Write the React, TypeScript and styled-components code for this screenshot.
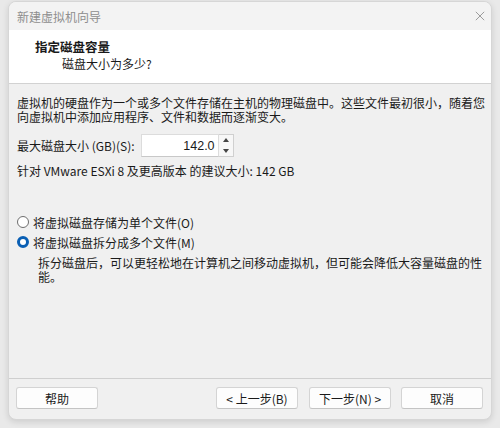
import React from 'react';
import { styled, createGlobalStyle } from 'styled-components';

const GlobalStyle = createGlobalStyle`
  html, body {
    margin: 0;
    padding: 0;
    background: #e9e9e9;
    font-family: "Noto Sans CJK SC", "Liberation Sans", sans-serif;
    font-size: 12px;
    color: #1a1a1a;
  }
`;

const App: React.FC = () => {
  return (
    <>
      <GlobalStyle />
      <Stage>
        <Window>
          <TitleBar>
            <span>新建虚拟机向导</span>
            <CloseIcon viewBox="0 0 12 12">
              <path d="M1 1 L11 11 M11 1 L1 11" stroke="#8a8a8a" strokeWidth="1" fill="none" />
            </CloseIcon>
          </TitleBar>
          <Header>
            <h4>指定磁盘容量</h4>
            <p>磁盘大小为多少?</p>
          </Header>
          <Body>
            <Para>
              虚拟机的硬盘作为一个或多个文件存储在主机的物理磁盘中。这些文件最初很小，随着您向虚拟机中添加应用程序、文件和数据而逐渐变大。
            </Para>
            <SizeRow>
              <span>最大磁盘大小 (GB)(S):</span>
              <SpinBox>
                <input value="142.0" readOnly />
                <Spinner>
                  <SpinButton>
                    <svg viewBox="0 0 6 4"><path d="M0 4 L3 0 L6 4 Z" fill="#444" /></svg>
                  </SpinButton>
                  <SpinButton>
                    <svg viewBox="0 0 6 4"><path d="M0 0 L3 4 L6 0 Z" fill="#444" /></svg>
                  </SpinButton>
                </Spinner>
              </SpinBox>
            </SizeRow>
            <Hint>针对 VMware ESXi 8 及更高版本 的建议大小: 142 GB</Hint>
            <Options>
              <RadioRow>
                <Radio $checked={false} />
                <span>将虚拟磁盘存储为单个文件(O)</span>
              </RadioRow>
              <RadioRow>
                <Radio $checked />
                <span>将虚拟磁盘拆分成多个文件(M)</span>
              </RadioRow>
              <OptionNote>
                拆分磁盘后，可以更轻松地在计算机之间移动虚拟机，但可能会降低大容量磁盘的性能。
              </OptionNote>
            </Options>
          </Body>
          <Footer>
            <Button>帮助</Button>
            <Spacer />
            <Button>&lt; 上一步(B)</Button>
            <Button>下一步(N) &gt;</Button>
            <Button $gap>取消</Button>
          </Footer>
        </Window>
      </Stage>
    </>
  );
};

export default App;

const Stage = styled.div`
  width: 500px;
  height: 428px;
  padding: 1px 8px 0;
  box-sizing: border-box;
`;

const Window = styled.div`
  width: 484px;
  height: 419px;
  background: #f0f0f0;
  border: 1px solid #d6d6d6;
  border-radius: 8px;
  box-sizing: border-box;
  box-shadow: 0 2px 6px rgba(0, 0, 0, 0.12);
  display: flex;
  flex-direction: column;
  overflow: hidden;
`;

const TitleBar = styled.div`
  height: 28px;
  flex-shrink: 0;
  background: #f3f3f3;
  display: flex;
  align-items: center;
  justify-content: space-between;
  padding: 0 6px 0 8px;
  > span {
    color: #8e8e8e;
    font-size: 12px;
  }
`;

const CloseIcon = styled.svg`
  width: 10px;
  height: 10px;
`;

const Header = styled.div`
  height: 54px;
  flex-shrink: 0;
  background: #ffffff;
  border-bottom: 1px solid #d2d2d2;
  box-sizing: border-box;
  padding: 8px 0 0 26px;
  > h4 {
    margin: 0;
    font-size: 12.5px;
    font-weight: 700;
    line-height: 17px;
  }
  > p {
    margin: 0;
    padding-left: 27px;
    font-size: 12px;
    line-height: 17px;
  }
`;

const Body = styled.div`
  flex: 1;
  padding: 12px 3px 0 8px;
  display: flex;
  flex-direction: column;
  border-bottom: 1px solid #cfcfcf;
`;

const Para = styled.p`
  margin: 0;
  line-height: 14px;
  font-size: 12px;
`;

const SizeRow = styled.div`
  display: flex;
  align-items: center;
  margin-top: 10px;
  gap: 6px;
  > span {
    line-height: 14px;
  }
`;

const SpinBox = styled.div`
  display: flex;
  height: 23px;
  width: 93px;
  > input {
    width: 78px;
    height: 23px;
    box-sizing: border-box;
    border: 1px solid #dcdcdc;
    border-bottom-color: #c8c8c8;
    background: #ffffff;
    text-align: right;
    padding: 0 3px 0 0;
    font-family: "Liberation Sans", "Noto Sans CJK SC", sans-serif;
    font-size: 12.5px;
    color: #1a1a1a;
    outline: none;
  }
`;

const Spinner = styled.div`
  width: 15px;
  height: 23px;
  display: flex;
  flex-direction: column;
  border: 1px solid #d0d0d0;
  border-left: none;
  box-sizing: border-box;
  background: #f7f7f7;
`;

const SpinButton = styled.div`
  flex: 1;
  display: flex;
  align-items: center;
  justify-content: center;
  > svg {
    width: 6px;
    height: 4px;
  }
`;

const Hint = styled.div`
  margin-top: 7px;
  line-height: 14px;
`;

const Options = styled.div`
  margin-top: 34px;
  display: flex;
  flex-direction: column;
`;

const RadioRow = styled.label`
  display: flex;
  align-items: center;
  gap: 4px;
  height: 20px;
`;

const Radio = styled.span<{ $checked?: boolean }>`
  width: 12px;
  height: 12px;
  border-radius: 50%;
  box-sizing: border-box;
  background: #ffffff;
  border: ${p => (p.$checked ? '3.5px solid #0a5fb4' : '1px solid #6e6e6e')};
`;

const OptionNote = styled.p`
  margin: 4px 0 0 21px;
  line-height: 14px;
  padding-right: 0;
`;

const Footer = styled.div`
  height: 38px;
  flex-shrink: 0;
  display: flex;
  align-items: center;
  padding: 0 8px 2px 7px;
  gap: 11px;
`;

const Spacer = styled.div`
  flex: 1;
`;

const Button = styled.button<{ $gap?: boolean }>`
  width: 82px;
  height: 22px;
  background: #fdfdfd;
  border: 1px solid #d4d4d4;
  border-bottom-color: #c4c4c4;
  border-radius: 3px;
  font-family: "Noto Sans CJK SC", "Liberation Sans", sans-serif;
  font-size: 12px;
  color: #1a1a1a;
  padding: 0;
  margin-left: ${p => (p.$gap ? '-1px' : '0')};
`;
